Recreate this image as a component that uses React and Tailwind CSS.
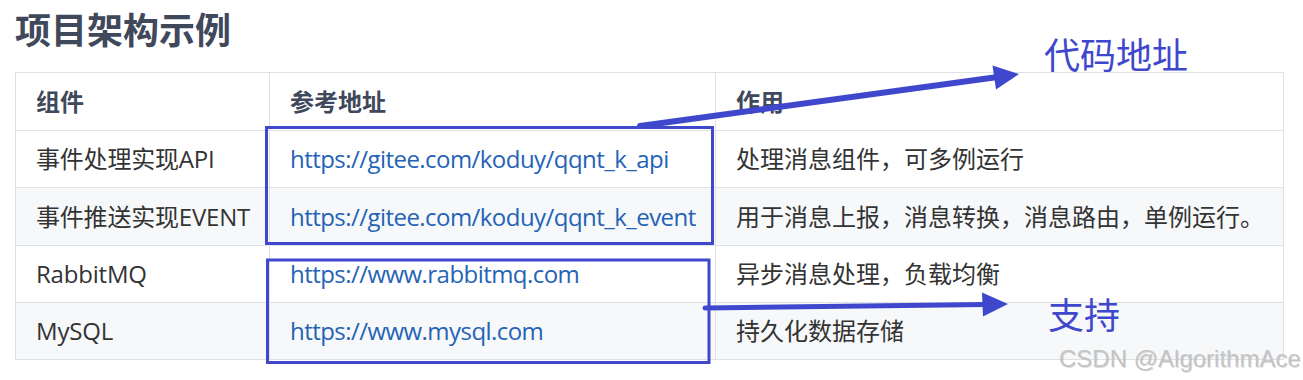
export default function App() {
  const rows = [
    { name: "事件处理实现API", url: "https://gitee.com/koduy/qqnt_k_api", desc: "处理消息组件，可多例运行", h: "h-[57px]", bg: "bg-white" },
    { name: "事件推送实现EVENT", url: "https://gitee.com/koduy/qqnt_k_event", desc: "用于消息上报，消息转换，消息路由，单例运行。", h: "h-[58px]", bg: "bg-[#f6f8fa]" },
    { name: "RabbitMQ", url: "https://www.rabbitmq.com", desc: "异步消息处理，负载均衡", h: "h-[57px]", bg: "bg-white" },
    { name: "MySQL", url: "https://www.mysql.com", desc: "持久化数据存储", h: "h-[57px]", bg: "bg-[#f6f8fa]" },
  ];
  const cell = "flex items-center pl-5 border-r border-b border-[#dfe2e5] whitespace-nowrap";
  return (
    <div className="relative w-[1303px] h-[380px] overflow-hidden bg-white font-['Open_Sans','Noto_Sans_CJK_SC',sans-serif]">
      <div className="flex flex-col pl-[15px] pt-[6px]">
        <h2 className="h-[45px] leading-[45px] text-[36px] font-bold text-[#40485b] font-['Noto_Sans_CJK_SC',sans-serif]">项目架构示例</h2>
        <div className="mt-[21px] w-[1269px] border-l border-t border-[#dfe2e5] grid grid-cols-[254px_446px_568px] text-[24px]">
          <div className={`${cell} h-[58px] font-bold text-[#40485b]`}>组件</div>
          <div className={`${cell} h-[58px] font-bold text-[#40485b]`}>参考地址</div>
          <div className={`${cell} h-[58px] font-bold text-[#40485b]`}>作用</div>
          {rows.map((r) => (
            <div key={r.name} className="contents">
              <div className={`${cell} ${r.h} ${r.bg} text-[#333333] tracking-[-0.2px]`}>{r.name}</div>
              <div className={`${cell} ${r.h} ${r.bg} text-[#2463b5] tracking-[-0.55px]`}>{r.url}</div>
              <div className={`${cell} ${r.h} ${r.bg} text-[#333333]`}>{r.desc}</div>
            </div>
          ))}
        </div>
      </div>

      <svg className="absolute left-0 top-0 pointer-events-none" width="1303" height="380" viewBox="0 0 1303 380">
        <rect x="266.5" y="127.5" width="446" height="116" fill="none" stroke="#3f48cc" strokeWidth="3" />
        <rect x="267.5" y="260" width="441.5" height="102.5" fill="none" stroke="#3f48cc" strokeWidth="3" />
        <line x1="640" y1="126" x2="996" y2="77.2" stroke="#3f48cc" strokeWidth="6" strokeLinecap="round" />
        <polygon points="1019,74 992.5,65.5 996,89.5" fill="#3f48cc" />
        <line x1="705" y1="308" x2="985" y2="304.6" stroke="#3f48cc" strokeWidth="5" strokeLinecap="round" />
        <polygon points="1008,304 982,292.5 983,316.5" fill="#3f48cc" />
      </svg>

      <div className="absolute left-[1044px] top-[35px] text-[36px] leading-[36px] text-[#3f48cc] font-['Noto_Sans_CJK_SC',sans-serif] whitespace-nowrap">代码地址</div>
      <div className="absolute left-[1048px] top-[295px] text-[36px] leading-[36px] text-[#3f48cc] font-['Noto_Sans_CJK_SC',sans-serif] whitespace-nowrap">支持</div>
      <div className="absolute left-[1059px] top-[347px] text-[24px] leading-[24px] text-[#c4c4c4] font-['Liberation_Sans',sans-serif] whitespace-nowrap [text-shadow:1px_1px_0_rgba(0,0,0,0.12)]">CSDN @AlgorithmAce</div>
    </div>
  );
}
